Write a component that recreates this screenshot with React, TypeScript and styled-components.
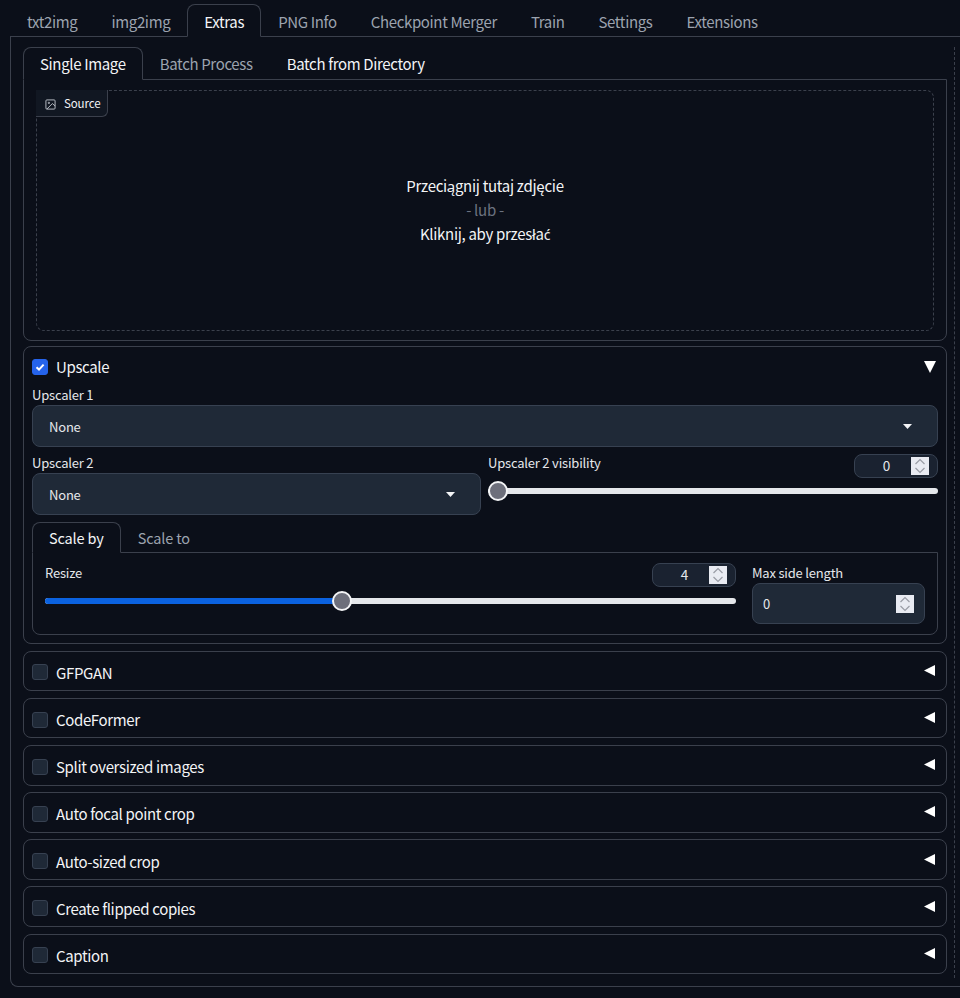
import React from "react"
import styled, { createGlobalStyle } from "styled-components"

const line = "#3b404c"

const Global = createGlobalStyle`
  html, body {
    margin: 0;
    background: #0b0f19;
    overflow: hidden;
  }
  body {
    font-family: "Noto Sans CJK JP", "Noto Sans", sans-serif;
    color: #f3f4f6;
  }
  * {
    box-sizing: border-box;
  }
`

const Page = styled.div`
  width: 960px;
  height: 998px;
  padding: 4px 0 0 10px;
  overflow: hidden;
`

const TabBar = styled.div`
  display: flex;
  height: 32px;
`

const Tab = styled.div<{ $active?: boolean; $bright?: boolean }>`
  display: flex;
  align-items: center;
  padding: 1px 16px 0;
  font-size: 15px;
  letter-spacing: -0.35px;
  line-height: 1;
  white-space: nowrap;
  color: ${p => (p.$active || p.$bright ? "#f3f4f6" : "#9ca3af")};
  border: 1px solid ${p => (p.$active ? line : "transparent")};
  border-bottom: ${p => (p.$active ? "1px solid #0b0f19" : "none")};
  border-radius: 8px 8px 0 0;
  margin-bottom: ${p => (p.$active ? "-1px" : "0")};
  height: ${p => (p.$active ? "33px" : "32px")};
  position: relative;
`

const SubTab = styled(Tab)`
  padding-top: 0;
  padding-bottom: 1px;
`

const OuterPanel = styled.div`
  display: flex;
  width: 960px;
  height: 951px;
  padding: 10px 0 8px 12px;
  border: 1px solid ${line};
  border-right: none;
  border-radius: 0 0 0 8px;
`

const Main = styled.div`
  display: flex;
  flex-direction: column;
  width: 924px;
  flex: none;
`

const DashedGap = styled.div`
  margin-left: 7px;
  flex: 1;
  border-left: 1px dashed ${line};
`

const ImagePanel = styled.div`
  height: 262px;
  padding: 10px 12px;
  border: 1px solid ${line};
  border-radius: 0 0 8px 8px;
`

const DropZone = styled.div`
  position: relative;
  display: flex;
  flex-direction: column;
  align-items: center;
  justify-content: center;
  height: 241px;
  padding-bottom: 1px;
  border: 1px dashed ${line};
  border-radius: 8px;
  font-size: 15px;
  letter-spacing: -0.3px;
  line-height: 24px;
  color: #f3f4f6;
`

const Muted = styled.div`
  color: #6b7280;
`

const Accented = styled.span`
  font-family: "Noto Sans", sans-serif;
  font-size: 14px;
`

const SourceBadge = styled.div`
  position: absolute;
  top: -1px;
  left: -1px;
  display: flex;
  align-items: center;
  gap: 8px;
  height: 27px;
  width: 72px;
  padding: 2px 0 0 9px;
  font-size: 11.5px;
  letter-spacing: -0.1px;
  line-height: 1;
  background: #111722;
  border: 1px solid ${line};
  border-width: 0 1px 1px 0;
  border-radius: 0 0 6px 0;
`

const Accordion = styled.section<{ $open?: boolean }>`
  margin-top: ${p => (p.$open ? "5px" : "6.5px")};
  border: 1px solid ${line};
  border-radius: 8px;
  height: ${p => (p.$open ? "298px" : "40.7px")};
  padding: ${p => (p.$open ? "0 8px 7px" : "0 8px")};
  display: flex;
  flex-direction: column;
`

const AccordionHead = styled.div<{ $open?: boolean }>`
  display: flex;
  align-items: center;
  gap: 8px;
  flex: none;
  height: ${p => (p.$open ? "39px" : "100%")};
  padding: ${p => (p.$open ? "0 2px 0 0" : "3px 2px 0 0")};
  font-size: 15px;
  letter-spacing: -0.35px;
  line-height: 1;
`

const HeadTitle = styled.span`
  flex: 1;
  color: #f3f4f6;
`

const Check = styled.span<{ $on?: boolean }>`
  display: flex;
  align-items: center;
  justify-content: center;
  flex: none;
  width: 16px;
  height: 16px;
  border-radius: 3px;
  background: ${p => (p.$on ? "#2563eb" : "#1f2937")};
  border: 1px solid ${p => (p.$on ? "#2563eb" : "#374151")};
`

const Field = styled.div<{ $flex?: string }>`
  display: flex;
  flex-direction: column;
  flex: ${p => p.$flex || "none"};
  min-width: 0;
`

const Label = styled.div`
  height: 19px;
  font-size: 13px;
  letter-spacing: -0.2px;
  line-height: 18px;
  color: #e5e7eb;
  white-space: nowrap;
`

const ResizeLabel = styled(Label)`
  margin-top: 1px;
`

const Select = styled.div<{ $height?: number }>`
  display: flex;
  align-items: center;
  justify-content: space-between;
  height: ${p => p.$height ?? 42}px;
  padding: 0 25px 0 16px;
  background: #1f2937;
  border: 1px solid #374151;
  border-radius: 8px;
  font-size: 13px;
  letter-spacing: -0.2px;
  line-height: 1;
  color: #e5e7eb;
`

const Row = styled.div`
  display: flex;
  gap: 7px;
  margin-top: 7px;
`

const SliderHead = styled.div`
  display: flex;
  justify-content: space-between;
  height: 24px;
`

const NumberBox = styled.div`
  display: flex;
  align-items: center;
  width: 84px;
  height: 24px;
  padding: 0 8px 0 0;
  background: #1a2230;
  border: 1px solid #374151;
  border-radius: 8px;
  font-size: 13.5px;
  line-height: 1;
  color: #e5e7eb;
`

const NumberValue = styled.span`
  width: 63px;
  margin-right: -7px;
  text-align: center;
`

const Spin = styled.span`
  display: flex;
  flex: none;
  width: 18px;
  height: 18px;
  background: #e9ebf2;
`

const Track = styled.div<{ $top: number }>`
  position: relative;
  height: 6px;
  margin-top: ${p => p.$top}px;
  background: #e5e7eb;
  border-radius: 3px;
`

const TrackFill = styled.div`
  height: 100%;
  background: #0b62e0;
  border-radius: 3px 0 0 3px;
`

const Thumb = styled.div`
  position: absolute;
  top: -7px;
  width: 20px;
  height: 20px;
  margin-left: -10px;
  background: #6d6f7b;
  border: 2px solid #f3f4f6;
  border-radius: 50%;
`

const ScaleGroup = styled.div`
  margin-top: 7px;
`

const ScalePanel = styled.div`
  display: flex;
  gap: 16px;
  height: 83px;
  padding: 10px 12px 0;
  border: 1px solid ${line};
  border-radius: 0 0 8px 8px;
`

const ScaleBar = styled(TabBar)`
  height: 30px;
`

const ScaleTab = styled(Tab)`
  height: ${p => (p.$active ? "31px" : "30px")};
  font-size: 14.5px;
  letter-spacing: -0.15px;
`

const MaxField = styled(Field)`
  width: 173px;
  padding-top: 1px;
`

const NumberInput = styled(Select)`
  padding: 0 10px 0 10px;
`

const LeftMark = styled.svg`
  margin-bottom: 3px;
`

const Down = () => (
  <svg width="12" height="12" viewBox="0 0 12 12">
    <polygon points="0,0 12,0 6,12" fill="#fff" />
  </svg>
)

const Left = () => (
  <LeftMark width="12" height="12" viewBox="0 0 12 12">
    <polygon points="11,0 11,11 0,5.5" fill="#fff" />
  </LeftMark>
)

const Caret = () => (
  <svg width="9" height="5" viewBox="0 0 9 5">
    <polygon points="0,0 9,0 4.5,5" fill="#f3f4f6" />
  </svg>
)

const Tick = () => (
  <svg width="12" height="12" viewBox="0 0 12 12">
    <path d="M2.5 6.3 L5 8.6 L9.6 3.6" fill="none" stroke="#fff" strokeWidth="2" />
  </svg>
)

const ImageIcon = () => (
  <svg width="11" height="11" viewBox="0 0 24 24" fill="none" stroke="#c2c6ce" strokeWidth="2">
    <rect x="2" y="2" width="20" height="20" rx="2" />
    <circle cx="8.5" cy="8.5" r="1.5" />
    <polyline points="22 15 16 10 4 22" />
  </svg>
)

const Chevrons = () => (
  <svg width="18" height="18" viewBox="0 0 18 18" fill="none" stroke="#9a9da6" strokeWidth="1.2">
    <path d="M4.5 7 L9 2.5 L13.5 7" />
    <path d="M4.5 11 L9 15.5 L13.5 11" />
  </svg>
)

const Stepper = ({ value }: { value: number }) => (
  <NumberBox>
    <NumberValue>{value}</NumberValue>
    <Spin>
      <Chevrons />
    </Spin>
  </NumberBox>
)

const topTabs = ["txt2img", "img2img", "Extras", "PNG Info", "Checkpoint Merger", "Train", "Settings", "Extensions"]
const closedSections = ["GFPGAN", "CodeFormer", "Split oversized images", "Auto focal point crop", "Auto-sized crop", "Create flipped copies", "Caption"]

export default function App() {
  return (
    <Page>
      <Global />
      <TabBar>
        {topTabs.map(t => (
          <Tab key={t} $active={t === "Extras"}>
            {t}
          </Tab>
        ))}
      </TabBar>
      <OuterPanel>
        <Main>
          <TabBar>
            <SubTab $active>Single Image</SubTab>
            <SubTab>Batch Process</SubTab>
            <SubTab $bright>Batch from Directory</SubTab>
          </TabBar>
          <ImagePanel>
            <DropZone>
              <SourceBadge>
                <ImageIcon />
                Source
              </SourceBadge>
              <div>Przeciągnij tutaj zdjęcie</div>
              <Muted>- lub -</Muted>
              <div>
                Kliknij, aby przesła<Accented>ć</Accented>
              </div>
            </DropZone>
          </ImagePanel>

          <Accordion $open>
            <AccordionHead $open>
              <Check $on>
                <Tick />
              </Check>
              <HeadTitle>Upscale</HeadTitle>
              <Down />
            </AccordionHead>
            <Field>
              <Label>Upscaler 1</Label>
              <Select>
                None
                <Caret />
              </Select>
            </Field>
            <Row>
              <Field $flex="0 0 449px">
                <Label>Upscaler 2</Label>
                <Select>
                  None
                  <Caret />
                </Select>
              </Field>
              <Field $flex="1">
                <SliderHead>
                  <Label>Upscaler 2 visibility</Label>
                  <Stepper value={0} />
                </SliderHead>
                <Track $top={10}>
                  <Thumb style={{ left: 10 }} />
                </Track>
              </Field>
            </Row>
            <ScaleGroup>
              <ScaleBar>
                <ScaleTab $active>Scale by</ScaleTab>
                <ScaleTab>Scale to</ScaleTab>
              </ScaleBar>
              <ScalePanel>
                <Field $flex="1">
                  <SliderHead>
                    <ResizeLabel>Resize</ResizeLabel>
                    <Stepper value={4} />
                  </SliderHead>
                  <Track $top={11}>
                    <TrackFill style={{ width: "43%" }} />
                    <Thumb style={{ left: "43%" }} />
                  </Track>
                </Field>
                <MaxField>
                  <Label>Max side length</Label>
                  <NumberInput $height={41}>
                    0
                    <Spin>
                      <Chevrons />
                    </Spin>
                  </NumberInput>
                </MaxField>
              </ScalePanel>
            </ScaleGroup>
          </Accordion>

          {closedSections.map(s => (
            <Accordion key={s}>
              <AccordionHead>
                <Check />
                <HeadTitle>{s}</HeadTitle>
                <Left />
              </AccordionHead>
            </Accordion>
          ))}
        </Main>
        <DashedGap />
      </OuterPanel>
    </Page>
  )
}
